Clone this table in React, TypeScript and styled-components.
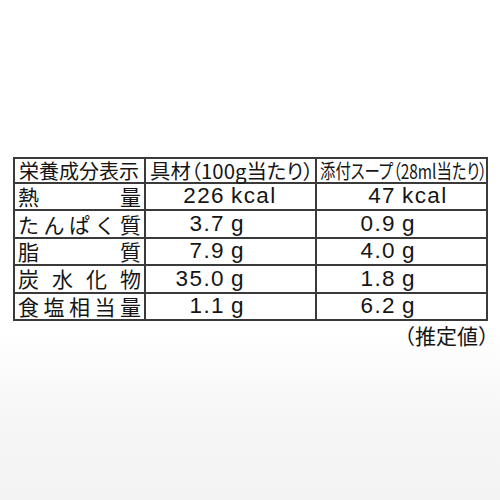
import React from "react";
import styled, { createGlobalStyle } from "styled-components";

const Global = createGlobalStyle`
  html, body { margin: 0; padding: 0; background: #fff; }
  body { width: 500px; height: 500px; overflow: hidden; }
`;

const Page = styled.div`
  width: 500px;
  height: 500px;
  box-sizing: border-box;
  padding: 157px 0 0 13px;
  background: linear-gradient(#ffffff 0px, #ffffff 330px, #f6f6f6 420px, #f3f3f3 500px);
  color: #151515;
  font-family: "Noto Sans CJK JP", "Noto Sans", sans-serif;
`;

const Table = styled.div`
  display: grid;
  width: 475px;
  box-sizing: border-box;
  grid-template-columns: 131px 171px 171px;
  grid-template-rows: 25px repeat(5, 27.4px);
  border-left: 2px solid #3a3a3a;
  border-top: 2px solid #3a3a3a;
`;

const Cell = styled.div`
  box-sizing: border-box;
  border-right: 2px solid #3a3a3a;
  border-bottom: 2px solid #3a3a3a;
  display: flex;
  align-items: center;
  white-space: nowrap;
`;

const HeadText = styled.span<{ $scale: number; $size: number; $pad: number }>`
  display: inline-block;
  font-size: ${(p) => p.$size}px;
  line-height: 1;
  font-feature-settings: "palt";
  transform: scaleX(${(p) => p.$scale});
  transform-origin: left center;
  margin-left: ${(p) => p.$pad}px;
`;

const Label = styled.div`
  flex: 1;
  display: flex;
  justify-content: space-between;
  padding: 0 3px 0 3px;
  font-size: 21px;
  line-height: 1;
`;

const Num = styled.span`
  width: 79px;
  text-align: right;
  font-family: "Liberation Sans", Arial, sans-serif;
  font-size: 22.5px;
  letter-spacing: 1.4px;
  line-height: 1;
`;

const Unit = styled.span`
  margin-left: 6px;
  font-family: "Liberation Sans", Arial, sans-serif;
  font-size: 22.5px;
  letter-spacing: 1.4px;
  line-height: 1;
`;

const Note = styled.div`
  width: 486px;
  text-align: right;
  margin-top: 3px;
  font-size: 21px;
  line-height: 1.05;
`;

const rows: { label: string; a: [string, string]; b: [string, string] }[] = [
  { label: "熱量", a: ["226", "kcal"], b: ["47", "kcal"] },
  { label: "たんぱく質", a: ["3.7", "g"], b: ["0.9", "g"] },
  { label: "脂質", a: ["7.9", "g"], b: ["4.0", "g"] },
  { label: "炭水化物", a: ["35.0", "g"], b: ["1.8", "g"] },
  { label: "食塩相当量", a: ["1.1", "g"], b: ["6.2", "g"] },
];

export default function App() {
  return (
    <>
      <Global />
      <Page>
        <Table>
          <Cell>
            <HeadText $scale={1} $size={20} $pad={4}>栄養成分表示</HeadText>
          </Cell>
          <Cell>
            <HeadText $scale={1.02} $size={20} $pad={4}>具材（100g当たり）</HeadText>
          </Cell>
          <Cell>
            <HeadText $scale={0.77} $size={20} $pad={3}>添付スープ（28ml当たり）</HeadText>
          </Cell>
          {rows.map((r) => (
            <React.Fragment key={r.label}>
              <Cell>
                <Label>
                  {Array.from(r.label).map((c, i) => (
                    <span key={i}>{c}</span>
                  ))}
                </Label>
              </Cell>
              <Cell>
                <Num>{r.a[0]}</Num>
                <Unit>{r.a[1]}</Unit>
              </Cell>
              <Cell>
                <Num>{r.b[0]}</Num>
                <Unit>{r.b[1]}</Unit>
              </Cell>
            </React.Fragment>
          ))}
        </Table>
        <Note>（推定値）</Note>
      </Page>
    </>
  );
}
